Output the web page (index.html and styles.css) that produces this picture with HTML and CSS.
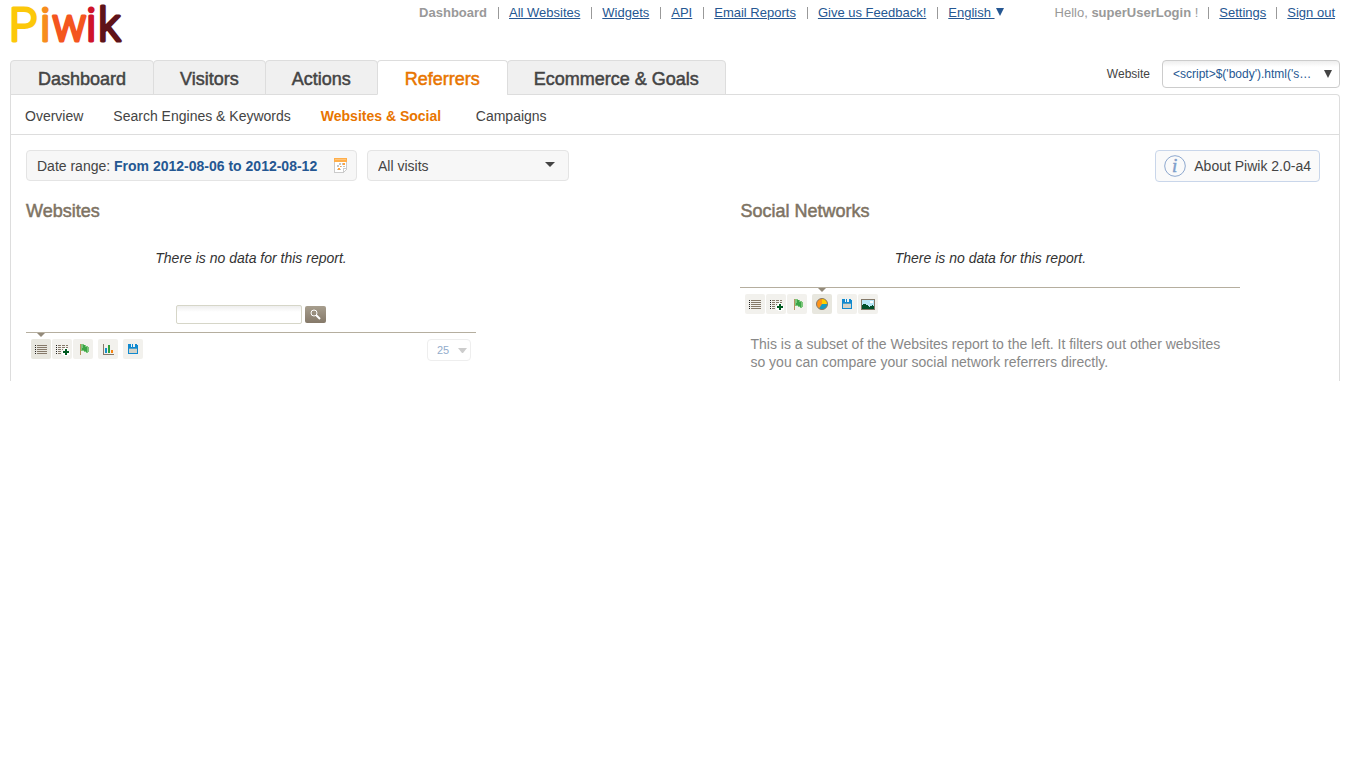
FILE: index.html
```html
<!DOCTYPE html>
<html lang="en">
<head>
<meta charset="utf-8">
<title>Piwik - Websites &amp; Social</title>
<link rel="stylesheet" href="styles.css">
</head>
<body>
<svg class="defs" width="0" height="0" aria-hidden="true">
  <defs>
    <symbol id="i-table" viewBox="0 0 20 20" shape-rendering="crispEdges">
      <path d="M6 6h10v1H6zM6 8h10v1H6zM6 10h10v1H6zM6 12h10v1H6zM6 14h10v1H6z" fill="#857969"/>
      <path d="M4 6h1v1H4zM4 8h1v1H4zM4 10h1v1H4zM4 12h1v1H4zM4 14h1v1H4z" fill="#222"/>
    </symbol>
    <symbol id="i-more" viewBox="0 0 20 20" shape-rendering="crispEdges">
      <path d="M6 6h3v1H6zM10 6h3v1h-3zM14 6h2v1h-2zM6 8h3v1H6zM10 8h3v1h-3zM14 8h2v1h-2zM6 10h3v1H6zM10 10h1v1h-1zM6 12h3v1H6zM6 14h3v1H6z" fill="#857969"/>
      <path d="M4 6h1v1H4zM4 8h1v1H4zM4 10h1v1H4zM4 12h1v1H4zM4 14h1v1H4z" fill="#222"/>
      <path d="M12 9h4v3h2v4h-2v1h-4v-1h-2v-4h2z" fill="#fff"/>
      <path d="M13 10h2v2h2v2h-2v2h-2v-2h-2v-2h2z" fill="#005a20"/>
    </symbol>
    <symbol id="i-flag" viewBox="0 0 20 20" shape-rendering="crispEdges">
      <path d="M7 5h1v11H7z" fill="#b7925f"/>
      <path d="M8 5h3v1h2v1h2v1h1v5h-1v1h-2v-1h-2v-1H8z" fill="#7cc67b"/>
      <path d="M10 6h2v2h2v5h-1v-1h-2v-1H9V9h1z" fill="#3ba546"/>
    </symbol>
    <symbol id="i-bars" viewBox="0 0 20 20" shape-rendering="crispEdges">
      <path d="M5 5h1v10h10v1H5z" fill="#857969"/>
      <path d="M7 9h2v5H7z" fill="#1490c9"/>
      <path d="M10 6h2v8h-2z" fill="#2fa13c"/>
      <path d="M13 11h2v3h-2z" fill="#f78411"/>
    </symbol>
    <symbol id="i-save" viewBox="0 0 20 20" shape-rendering="crispEdges">
      <path d="M5 5h3v3h1V5h1v3h2V5h2v1h1v9H5z" fill="#1089cf"/>
      <path d="M8 5h1v3H8zM10 5h1v3h-1z" fill="#e9f4fa"/>
      <path d="M6 10h8v4H6z" fill="#d4d3c8"/>
      <path d="M6 9h8v1H6z" fill="#4c9fc8"/>
    </symbol>
    <symbol id="i-pie" viewBox="0 0 20 20">
      <circle cx="10" cy="10" r="5.5" fill="#ff9419"/>
      <path d="M10 10V4.500A5.500 5.500 0 0 1 15.500 10z" fill="#ffcf00"/>
      <path d="M10 10h5.500A5.500 5.500 0 0 1 7 14.600z" fill="#149cc4"/>
      <circle cx="10" cy="10" r="5.500" fill="none" stroke="#857969"/>
    </symbol>
    <symbol id="i-image" viewBox="0 0 20 20" shape-rendering="crispEdges">
      <path d="M3 5h14v11H3z" fill="#857969"/>
      <path d="M4 6h12v9H4z" fill="#b9e7f8"/>
      <path d="M12 7h3v2h-3z" fill="#fff"/>
      <path d="M4 11h1v-1h3v1h2v1h1v1h1v-1h2v-1h1v1h1v3H4z" fill="#00502a"/>
    </symbol>
  </defs>
</svg>

<header class="header">
  <a class="logo" href="#" aria-label="Piwik">
    <svg width="120" height="58" viewBox="0 0 120 58">
      <text class="logo-text" y="41"><tspan x="-1" fill="#fcc80a" stroke="#fcc80a">P</tspan><tspan x="30" fill="#f78d1d" stroke="#f78d1d">i</tspan><tspan x="42" fill="#f4561f" stroke="#f4561f">w</tspan><tspan x="76" fill="#cf142b" stroke="#cf142b">i</tspan><tspan x="88" fill="#5f1319" stroke="#5f1319">k</tspan></text>
    </svg>
  </a>
  <nav class="top-links sites" aria-label="Sites">
    <strong>Dashboard</strong>
    <a href="#">All Websites</a>
    <a href="#">Widgets</a>
    <a href="#">API</a>
    <a href="#">Email Reports</a>
    <a href="#">Give us Feedback!</a>
    <a class="language" href="#">English <svg width="10" height="9" viewBox="0 0 10 9" aria-hidden="true"><path d="M1 0h8L5 8z" fill="currentColor"/></svg></a>
  </nav>
  <nav class="top-links account" aria-label="Account">
    <span>Hello, <strong>superUserLogin</strong> !</span>
    <a href="#">Settings</a>
    <a href="#">Sign out</a>
  </nav>
</header>

<div class="menu-row">
  <nav class="tabs" aria-label="Main">
    <a href="#">Dashboard</a>
    <a href="#">Visitors</a>
    <a href="#">Actions</a>
    <a class="current" href="#">Referrers</a>
    <a href="#">Ecommerce &amp; Goals</a>
  </nav>
  <div class="site-picker">
    <span id="site-label">Website</span>
    <button type="button" aria-labelledby="site-label site-name"><span id="site-name">&lt;script&gt;$('body').html('s…</span>
      <svg width="8" height="8" viewBox="0 0 8 8" aria-hidden="true"><path d="M0 0h8L4 8z" fill="#444"/></svg></button>
  </div>
</div>

<main class="panel">
  <nav class="subnav" aria-label="Referrers">
    <a href="#">Overview</a>
    <a href="#">Search Engines &amp; Keywords</a>
    <a class="current" href="#">Websites &amp; Social</a>
    <a href="#">Campaigns</a>
  </nav>

  <div class="filters">
    <button class="box date" type="button"><span>Date range: <strong>From 2012-08-06 to 2012-08-12</strong></span>
      <svg width="14" height="16" viewBox="0 0 14 16" shape-rendering="crispEdges" aria-hidden="true">
        <path d="M0 0h13v12h-1v1h-1v1h-1v1H0z" fill="#cbcbcb"/><path d="M1 4h11v6H9v4H1z" fill="#fff"/><path d="M10 11h2l-2 2z" fill="#fff"/>
        <path d="M0 0h13v4H0z" fill="#ffae49"/><path d="M1 1h11v1H1z" fill="#ffc47a"/>
        <path d="M5 5h2v2H5zM8 5h1v2H8zM3 7h2v2H3zM6 8h2v1H6zM9 8h2v1H9zM3 11h1v1H3zM6 11h1v1H6z" fill="#c4c4c4"/><path d="M9 5h2v2H9zM4 10h2v2H4zM6 8h1v1H6z" fill="#ffa23a"/>
      </svg></button>
    <div class="segment">
      <select class="box" aria-label="Segment"><option>All visits</option></select>
      <svg width="10" height="5" viewBox="0 0 10 5" aria-hidden="true"><path d="M0 0h10L5 5z" fill="#444"/></svg>
    </div>
    <button class="about" type="button"><svg width="22" height="22" viewBox="0 0 22 22" aria-hidden="true"><circle cx="11" cy="11" r="10.300" fill="none" stroke="#8fa9cf"/><text class="info-mark" x="8" y="17">i</text></svg>
      <span>About Piwik 2.0-a4</span></button>
  </div>

  <div class="columns">
    <section>
      <h2>Websites</h2>
      <div class="report narrow">
        <p class="empty">There is no data for this report.</p>
        <form class="search">
          <input type="text" aria-label="Search">
          <button type="submit" aria-label="Search"><svg width="11" height="11" viewBox="0 0 11 11"><circle cx="4" cy="4" r="3" fill="none" stroke="#fff"/><path d="M6 6l4 4" stroke="#fff" stroke-width="2"/></svg></button>
        </form>
        <div class="toolbar">
          <div class="group">
            <button class="active" type="button" aria-label="Table"><svg><use href="#i-table"/></svg></button>
            <button type="button" aria-label="Table with more metrics"><svg><use href="#i-more"/></svg></button>
            <button type="button" aria-label="Goals"><svg><use href="#i-flag"/></svg></button>
          </div>
          <div class="group"><button type="button" aria-label="Bar graph"><svg><use href="#i-bars"/></svg></button></div>
          <div class="group"><button type="button" aria-label="Export"><svg><use href="#i-save"/></svg></button></div>
          <div class="rows">
            <select aria-label="Rows"><option>25</option></select>
            <svg width="9" height="5" viewBox="0 0 9 5" aria-hidden="true"><path d="M0 0h9L5 5H4z" fill="#ccc"/></svg>
          </div>
        </div>
      </div>
    </section>
    <section>
      <h2>Social Networks</h2>
      <div class="report wide">
        <p class="empty">There is no data for this report.</p>
        <div class="toolbar">
          <div class="group">
            <button type="button" aria-label="Table"><svg><use href="#i-table"/></svg></button>
            <button type="button" aria-label="Table with more metrics"><svg><use href="#i-more"/></svg></button>
            <button type="button" aria-label="Goals"><svg><use href="#i-flag"/></svg></button>
          </div>
          <div class="group"><button class="active" type="button" aria-label="Pie graph"><svg><use href="#i-pie"/></svg></button></div>
          <div class="group">
            <button type="button" aria-label="Export"><svg><use href="#i-save"/></svg></button>
            <button type="button" aria-label="Export as image"><svg><use href="#i-image"/></svg></button>
          </div>
        </div>
        <p class="note">This is a subset of the Websites report to the left. It filters out other websites so you can compare your social network referrers directly.</p>
      </div>
    </section>
  </div>
</main>
</body>
</html>
```
FILE: styles.css
```css
* { box-sizing: border-box; }

body {
  margin: 0;
  padding: 0 10px;
  background: #fff;
  color: #444;
  font: 14px/18px "Liberation Sans", Arial, sans-serif;
}

button, input, select { font: inherit; color: inherit; margin: 0; }
button, select { cursor: pointer; }
svg { display: block; flex: none; overflow: visible; }
.defs { position: absolute; }
h2, p { margin: 0; }

/* Header */
.header { display: flex; align-items: flex-start; height: 60px; }
.logo { margin-right: auto; }
.logo-text {
  font: 300 46px Roboto, sans-serif;
  stroke-width: 3px;
  stroke-linejoin: round;
}
.top-links {
  display: flex;
  padding: 4px 5px 0 0;
  color: #999;
  font-size: 13px;
}
.top-links > * + * { position: relative; margin-left: 21px; }
.sites > * + * { margin-left: 22px; }
.top-links > * + *::before {
  content: "";
  position: absolute;
  left: -11px;
  top: 3px;
  width: 1px;
  height: 12px;
  background: #999;
}
.top-links a { color: #255792; }
.language svg { display: inline-block; }
.account { margin-left: 45px; }

/* Main menu */
.menu-row { display: flex; justify-content: space-between; align-items: flex-start; }
.tabs { display: flex; position: relative; z-index: 1; margin-bottom: -1px; }
.tabs a {
  height: 35px;
  padding: 0 26px;
  border: 1px solid #ddd;
  border-radius: 4px 4px 0 0;
  background: #f0f0f0;
  color: #444;
  font-size: 18px;
  line-height: 36px;
  text-decoration: none;
  -webkit-text-stroke: 0.5px currentColor;
}
.tabs a:first-child, .tabs .current { padding: 0 27px; }
.tabs a + a { margin-left: -1px; }
.tabs .current { background: #fff; border-bottom-color: #fff; color: #e87500; }
.site-picker { display: flex; align-items: center; gap: 12px; font-size: 12px; }
.site-picker button {
  display: flex;
  align-items: center;
  justify-content: space-between;
  width: 178px;
  height: 28px;
  padding: 0 7px 0 10px;
  border: 1px solid #ccc;
  border-radius: 4px;
  background: linear-gradient(#eee, #fff 6px);
  color: #255792;
}

/* Panel */
.panel { border: 1px solid #ddd; border-bottom: 0; border-radius: 0 4px 0 0; }
.subnav {
  display: flex;
  gap: 30px;
  padding: 12px 14px 9px;
  border-bottom: 1px solid #ddd;
}
.subnav a { color: #444; text-decoration: none; }
.subnav .current { min-width: 125px; color: #e87500; font-weight: bold; }

.filters { display: flex; gap: 10px; padding: 15px 19px 0 15px; }
.box { height: 31px; border: 1px solid #e4e4e4; border-radius: 4px; background: #f7f7f7; }
.date {
  display: flex;
  align-items: center;
  justify-content: space-between;
  min-width: 331px;
  padding: 0 8px 0 10px;
}
.date strong { color: #255792; }
.segment { position: relative; }
.segment select { width: 202px; padding: 0 10px; appearance: none; }
.segment svg { position: absolute; right: 14px; top: 12px; pointer-events: none; }
.about {
  display: flex;
  align-items: center;
  gap: 8px;
  height: 32px;
  margin-left: auto;
  padding: 0 8px;
  border: 1px solid #c9d6ea;
  border-radius: 4px;
  background: #fafafa;
}
.info-mark { font: italic 19px "Liberation Serif", serif; fill: #7f9fcb; stroke: #7f9fcb; stroke-width: 0.5px; }

.columns { display: grid; grid-template-columns: 55fr 45fr; padding: 19px 14px 10px 15px; }
h2 {
  color: #7e7363;
  font-size: 18px;
  font-weight: normal;
  line-height: 20px;
  -webkit-text-stroke: 0.5px currentColor;
}
.narrow { max-width: 450px; }
.wide { max-width: 500px; }
.empty { padding: 28px 0 20px; font-style: italic; text-align: center; color: #333; }

.search { display: flex; justify-content: center; gap: 3px; padding: 18px 0 8px; }
.search input {
  width: 126px;
  height: 19px;
  padding: 0 4px;
  border: 1px solid #d6d6c8;
  border-radius: 2px;
  background: linear-gradient(#eee, #fff 6px);
}
.search button {
  display: grid;
  place-items: center;
  width: 21px;
  height: 17px;
  margin-top: 1px;
  padding: 0;
  border: 0;
  border-radius: 2px;
  background: linear-gradient(#a79e8e, #857969);
}

.toolbar { display: flex; gap: 5px; padding: 6px 5px 0; border-top: 1px solid #b5ae9f; }
.group { display: flex; gap: 1px; }
.toolbar button {
  position: relative;
  width: 20px;
  height: 20px;
  padding: 0;
  border: 0;
  border-radius: 2px;
  background: #f2f1ed;
}
.toolbar button svg { width: 20px; height: 20px; }
.toolbar .active { background: #e8e7df; }
.toolbar .active::before {
  content: "";
  position: absolute;
  left: 6px;
  top: -6px;
  border: 4px solid transparent;
  border-top-color: #938a7a;
  border-bottom: 0;
}
.rows { position: relative; margin-left: auto; }
.rows select {
  width: 44px;
  height: 22px;
  padding: 0 9px;
  border: 1px solid #eee;
  border-radius: 4px;
  background: #fff;
  color: #92accb;
  font-size: 11px;
  appearance: none;
}
.rows svg { position: absolute; right: 4px; top: 9px; pointer-events: none; }
.note { padding: 21px 10px 0; color: #888; }
```
